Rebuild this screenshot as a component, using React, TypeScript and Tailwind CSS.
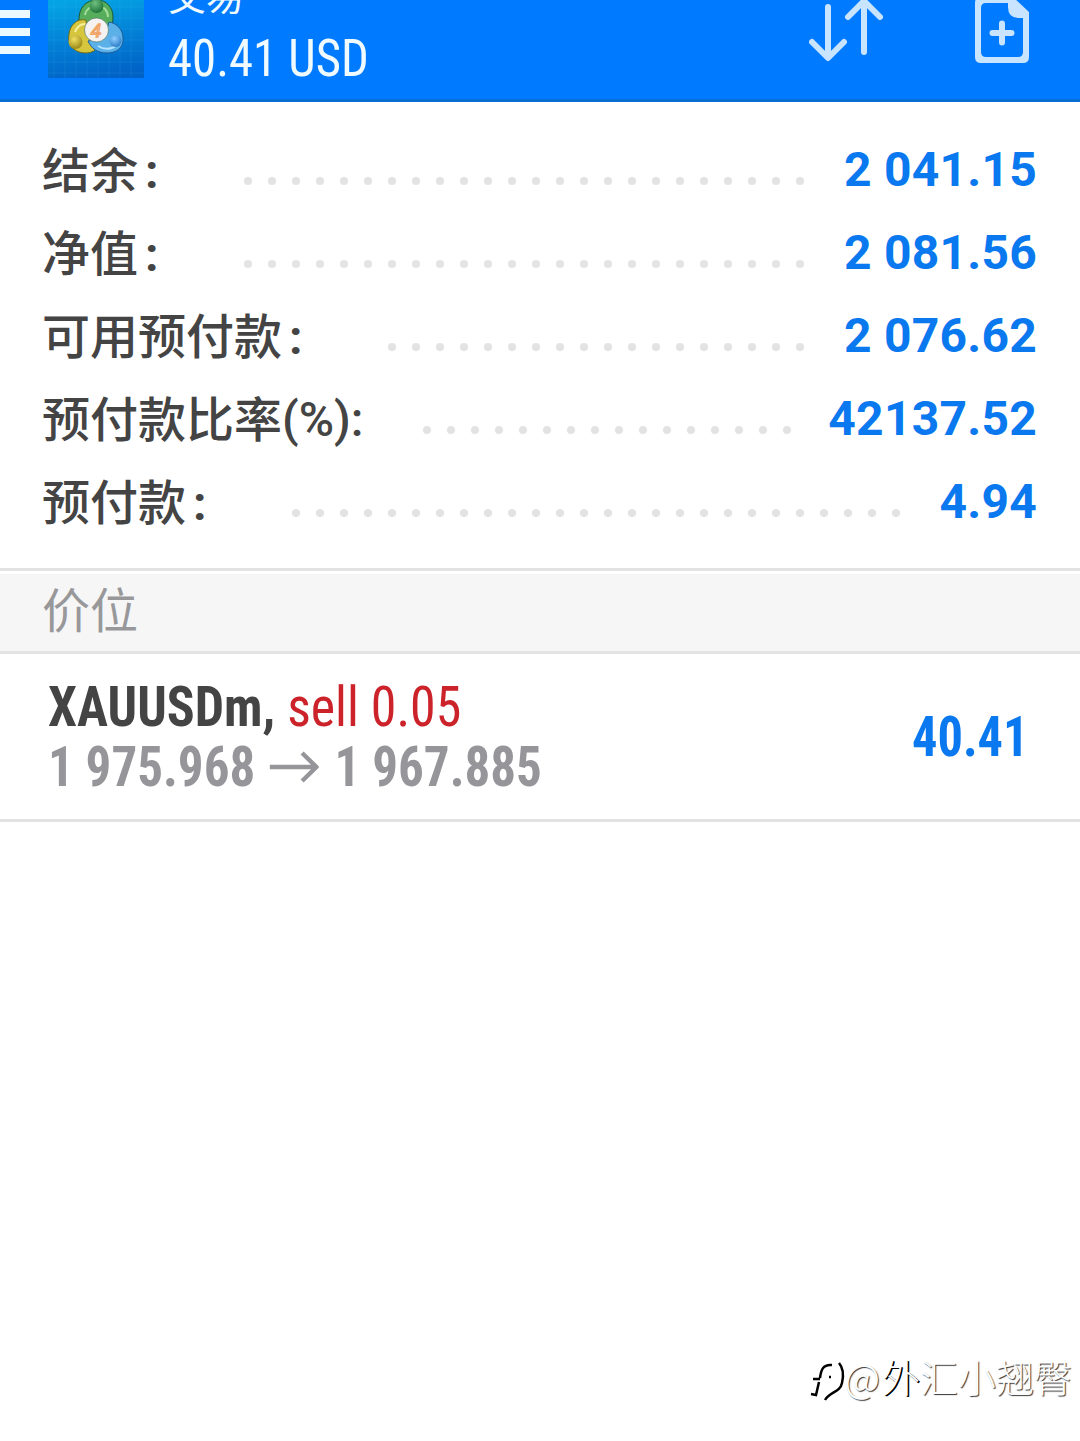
const rows = [
  { label: "结余", suffix: "", value: "2 041.15", dots: 24 },
  { label: "净值", suffix: "", value: "2 081.56", dots: 24 },
  { label: "可用预付款", suffix: "", value: "2 076.62", dots: 18 },
  { label: "预付款比率", suffix: "(%):", value: "42137.52", dots: 16 },
  { label: "预付款", suffix: "", value: "4.94", dots: 26 },
];

function AppLogo() {
  return (
    <svg className="block h-[78px] w-24" viewBox="0 0 96 78">
      <defs>
        <linearGradient id="tile" x1="0.3" y1="0" x2="0.5" y2="1">
          <stop offset="0" stopColor="#04a4e4" />
          <stop offset="0.45" stopColor="#0384d8" />
          <stop offset="1" stopColor="#0062c6" />
        </linearGradient>
        <radialGradient id="green" cx="0.4" cy="0.3" r="0.8">
          <stop offset="0" stopColor="#6fc080" />
          <stop offset="1" stopColor="#14692f" />
        </radialGradient>
        <radialGradient id="gold" cx="0.4" cy="0.3" r="0.8">
          <stop offset="0" stopColor="#f0e060" />
          <stop offset="1" stopColor="#8f7c10" />
        </radialGradient>
        <radialGradient id="sky" cx="0.4" cy="0.3" r="0.8">
          <stop offset="0" stopColor="#8fd0ff" />
          <stop offset="1" stopColor="#2273c4" />
        </radialGradient>
      </defs>
      <rect width="96" height="78" fill="url(#tile)" />
      <path
        d="M6 0V78M17 0V78M28 0V78M39 0V78M50 0V78M61 0V78M72 0V78M83 0V78M0 7H96M0 18H96M0 29H96M0 40H96M0 51H96M0 62H96M0 73H96"
        stroke="#5cc4f4"
        strokeOpacity="0.12"
        fill="none"
      />
      <path d="M31 22C30 8 38 0 49 0C59 0 65 8 65 17C65 24 63 29 58 33L40 30C36 27 31 26 31 22Z" fill="#56ae5c" stroke="#1a5a34" />
      <path d="M38 20C29 18 22 25 21 34C19 45 26 53 38 53C44 53 48 50 50 46L40 34Z" fill="#d6c63e" stroke="#6e6a18" />
      <path d="M61 22C69 23 75 30 75 38C76 48 68 53 59 53C49 53 43 48 40 41L56 38Z" fill="#5cb0e8" stroke="#1c5c98" />
      <path d="M37 15C38 9 43 6 49 6C56 6 60 11 60 17" fill="none" stroke="#a4dc98" strokeWidth="2" />
      <path d="M27 32C29 27 32 24 37 24" fill="none" stroke="#f6f0a0" strokeWidth="2" />
      <path d="M50 46C58 51 69 49 72 40" fill="none" stroke="#b4e4ff" strokeWidth="2" />
      <circle cx="48.500" cy="6" r="7" fill="url(#green)" />
      <circle cx="27.500" cy="42" r="7" fill="url(#gold)" />
      <circle cx="67.500" cy="41" r="6" fill="url(#sky)" />
      <circle cx="48.500" cy="30" r="12" fill="#f6f2f2" stroke="#3f6a5a" strokeOpacity="0.6" />
      <text x="48" y="37" textAnchor="middle" fontFamily="Roboto" fontStyle="italic" fontSize="19" fill="#fbe6c0" stroke="#f0a468" strokeWidth="1.300">4</text>
    </svg>
  );
}

function Header() {
  return (
    <header className="flex h-[102px] shrink-0 items-start overflow-hidden border-b-[3px] border-[#0a6fd4] bg-[#007aff] text-[#f0fbff]">
      <div className="flex w-[30px] flex-col gap-2.5 pt-2.5">
        <span className="h-2 bg-[#ecfaff]" />
        <span className="h-2 bg-[#ecfaff]" />
        <span className="h-2 bg-[#ecfaff]" />
      </div>
      <div className="ml-[18px]">
        <AppLogo />
      </div>
      <div className="ml-6 flex-1">
        <div className="-mt-[30px] h-[47px] text-[38px] leading-[47px] whitespace-nowrap">交易</div>
        <div className="mt-3 origin-left scale-x-[0.938] text-[52px] leading-[60px] whitespace-nowrap [font-family:Roboto,sans-serif] [font-stretch:75%]">
          40.41 USD
        </div>
      </div>
      <svg className="mr-[92px] h-[64px] w-[74px]" viewBox="809 0 74 64" fill="none" stroke="#c8e4ff" strokeWidth="6" strokeLinecap="round" strokeLinejoin="round">
        <path d="M828 7V57M812 42L828 58L844 42M864 52V2M848 17L864 1L880 17" />
      </svg>
      <svg className="mr-[50px] h-[64px] w-[55px]" viewBox="975 0 55 64">
        <path fill="#c8e4ff" fillRule="evenodd" d="M981 -3H1013L1029 12V57Q1029 63 1023 63H981Q975 63 975 57V3Q975 -3 981 -3ZM986 3Q981 3 981 8V52Q981 57 986 57H1018Q1023 57 1023 52V18H1019Q1008 18 1008 7V3Z" />
        <path d="M1002 23.500V42.500M992.500 33H1011.500" stroke="#c8e4ff" strokeWidth="6" strokeLinecap="round" />
      </svg>
    </header>
  );
}

function Summary() {
  return (
    <section className="flex h-[466px] shrink-0 flex-col pt-[26px] pr-[43px] pl-[42px] text-5xl leading-[83px] [font-family:Roboto,'Noto_Sans_CJK_SC',sans-serif]">
      {rows.map((row) => (
        <div key={row.label} className="flex h-[83px] items-start">
          <span className="flex font-medium whitespace-nowrap text-[#444]">
            <span className="pt-0.5">{row.label}</span>
            {row.suffix ? (
              <span className="mr-0.5 pt-px">{row.suffix}</span>
            ) : (
              <span className="w-12 pt-0.5 pl-[7px] font-bold">:</span>
            )}
          </span>
          <span className="mt-[49px] ml-[58px] flex gap-4">
            {Array.from({ length: row.dots }, (_, i) => (
              <span key={i} className="size-2 rounded-full bg-[#e3e3e3]" />
            ))}
          </span>
          <span className="ml-auto font-bold tracking-[0.25px] whitespace-pre text-[#0a78ee]">{row.value}</span>
        </div>
      ))}
    </section>
  );
}

function Position() {
  return (
    <section className="flex h-[168px] shrink-0 items-center justify-between border-b-[3px] border-[#e3e3e3] pr-[52px] pl-12 [font-family:Roboto,sans-serif] [font-stretch:75%]">
      <div className="text-[56px] leading-[60px] whitespace-nowrap">
        <div className="origin-left scale-x-[0.926] font-bold text-[#444]">
          XAUUSDm, <span className="font-normal text-[#cc2229]">sell 0.05</span>
        </div>
        <div className="flex origin-left scale-x-[0.912] items-center font-bold text-[#96969a]">
          1 975.968
          <svg className="mr-[17px] ml-[16px] h-8 w-[54px]" viewBox="0 0 50 32" preserveAspectRatio="none" fill="none" stroke="#96969a" strokeWidth="4.500">
            <path d="M0 16H48M33 2L47.500 16L33 30" />
          </svg>
          1 967.885
        </div>
      </div>
      <div className="origin-right scale-x-[0.9] text-[56px] font-bold text-[#0a78ee]">40.41</div>
    </section>
  );
}

function Watermark() {
  return (
    <div className="mt-auto mb-[37px] flex items-center self-end pr-2 text-[38px] leading-[56px] font-light text-white [text-shadow:1px_1px_1px_#333]">
      <svg className="mt-2 h-11 w-[38px]" viewBox="0 0 38 44" fill="none" stroke="#000" strokeWidth="2.500">
        <path d="M22 7C13 6 11 12 10 20M3 21H10M9 24L6 37L1 36M29 5Q35 12 32 25C30 35 20 33 15 42" />
        <path d="M19 19H21" />
      </svg>
      <span className="mr-0.5 -ml-1 text-[39px]">@</span>
      <span className="[text-shadow:1px_1px_0_#000,1.5px_1px_0_#000]">外</span>
      <span>汇小翘臀</span>
    </div>
  );
}

export default function App() {
  return (
    <main className="flex h-[1441px] w-[1080px] flex-col overflow-hidden bg-white [font-family:'Noto_Sans_CJK_SC',sans-serif]">
      <Header />
      <Summary />
      <div className="h-[86px] shrink-0 border-y-[3px] border-[#e3e3e3] bg-white pt-[3px]">
        <h2 className="h-[77px] bg-[#f6f6f6] pl-[42px] text-5xl leading-[66px] text-[#98989a]">价位</h2>
      </div>
      <Position />
      <Watermark />
    </main>
  );
}
